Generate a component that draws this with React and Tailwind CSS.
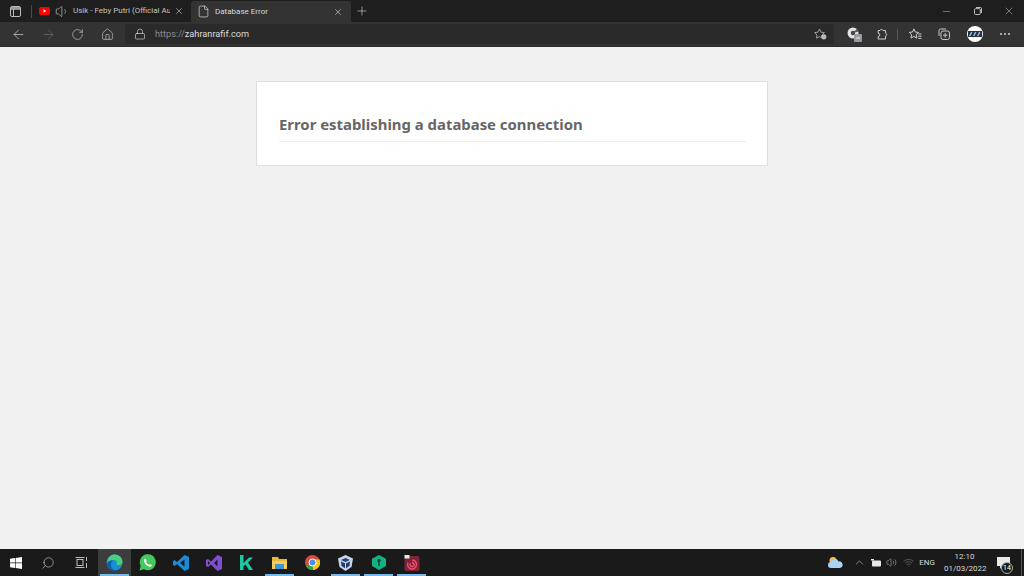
import { ArrowLeft, ArrowRight, RotateCw, Home, Lock, Plus, X, Minus, Volume1, File, Search, ChevronUp, Wifi, Volume2 } from "lucide-react"

const ui = { fontFamily: 'Roboto, "Open Sans", sans-serif' }

function Tabs() {
  return (
    <div className="h-[22px] bg-[#1e1e1e] flex items-stretch text-[#c4c4c4]">
      <div className="w-[31px] flex items-center justify-center">
        <svg width="11" height="11" viewBox="0 0 11 11" fill="none" stroke="#bdbdbd">
          <rect x="0.5" y="0.5" width="10" height="10" rx="1.5" />
          <path d="M0.5 3.2H10.5M3.5 3.2V10.5" />
          <path d="M1 1h9v2H1z" fill="#9a9a9a" stroke="none" />
        </svg>
      </div>
      <div className="w-px h-[13px] bg-[#4a4a4a] self-center" />
      <div className="w-[159px] flex items-center pl-[7px]">
        <svg width="11" height="8" viewBox="0 0 11 8" className="shrink-0">
          <rect width="11" height="8" rx="2" fill="#f00" />
          <path d="M4.5 2.2 7.3 4 4.5 5.8z" fill="#fff" />
        </svg>
        <Volume1 size={15} strokeWidth={1} className="ml-[5px] shrink-0 text-[#d0d0d0]" />
        <span className="ml-[3px] text-[8px] whitespace-nowrap overflow-hidden w-[97px]">Usik - Feby Putri (Official Au</span>
        <X size={10} strokeWidth={1.5} className="ml-[4px] shrink-0 text-[#d0d0d0]" />
      </div>
      <div className="w-[160px] bg-[#333333] rounded-t-[3px] mt-px flex items-center pl-[6px] text-[#d8d8d8]">
        <File size={13} strokeWidth={1.2} className="shrink-0 text-[#e8e8e8]" />
        <span className="ml-[5px] text-[8px] whitespace-nowrap w-[118px]">Database Error</span>
        <X size={10} strokeWidth={1.5} className="shrink-0 text-[#d0d0d0]" />
      </div>
      <div className="w-[22px] flex items-center justify-center">
        <Plus size={14} strokeWidth={1} className="text-[#e0e0e0]" />
      </div>
      <div className="ml-auto flex items-center text-[#cfcfcf]">
        <div className="w-[31px] flex justify-center"><Minus size={11} strokeWidth={1} /></div>
        <div className="w-[31px] flex justify-center">
          <svg width="8" height="8" viewBox="0 0 8 8" fill="none" stroke="#cfcfcf" strokeWidth="0.9">
            <rect x="0.5" y="1.7" width="5.8" height="5.8" rx="1" />
            <path d="M2 .5h4.5a1 1 0 0 1 1 1V6" />
          </svg>
        </div>
        <div className="w-[31px] flex justify-center"><X size={12} strokeWidth={1} /></div>
      </div>
    </div>
  )
}

function Toolbar() {
  return (
    <div className="h-[25px] bg-[#333333] flex items-start text-[#d6d6d6] border-b border-[#2a2a2a]">
      <div className="w-[125px] h-[24px] flex items-center shrink-0">
        <div className="w-[36px] flex justify-center"><ArrowLeft size={15} strokeWidth={1.1} /></div>
        <div className="w-[24px] flex justify-center text-[#6e6e6e]"><ArrowRight size={15} strokeWidth={1.1} /></div>
        <div className="w-[35px] flex justify-center"><RotateCw size={13} strokeWidth={1.1} /></div>
        <div className="w-[24px] flex justify-center"><Home size={13} strokeWidth={1.1} /></div>
      </div>
      <div className="w-[709px] h-[20px] mt-[2px] bg-[#2a2a2a] rounded-[3px] flex items-center pl-[9px] pr-[7px] shrink-0">
        <Lock size={12} strokeWidth={1.2} className="shrink-0 text-[#e8e8e8]" />
        <span className="ml-[9px] text-[9.2px] text-[#8a8a8a]">https://<span className="text-[#dcdcdc]">zahranrafif.com</span></span>
        <svg width="13" height="12" viewBox="0 0 13 12" fill="none" stroke="#a8a8a8" strokeWidth="0.9" className="ml-auto">
          <path d="M5.5 1 7 4.2l3.4.4L8 7l.6 3.2-3.1-1.6-3 1.6L3 7 .6 4.6 4 4.2z" />
          <circle cx="9.8" cy="8.8" r="2.6" fill="#bbb" stroke="none" />
        </svg>
      </div>
      <div className="h-[24px] flex items-center flex-1">
        <div className="w-[40px] flex justify-center">
          <svg width="15" height="16" viewBox="0 0 15 16">
            <circle cx="6" cy="7" r="5.5" fill="#e2e2e2" />
            <circle cx="6" cy="7" r="2.2" fill="#444" />
            <path d="M6 7 10 2.5l1.5 3z" fill="#555" />
            <rect x="7" y="8" width="8" height="8" rx="1" fill="#9a9aa2" />
            <path d="M9 12h4" stroke="#fff" strokeWidth="0.8" />
          </svg>
        </div>
        <div className="w-[16px] flex justify-center">
          <svg width="11" height="12" viewBox="0 0 11 12" fill="none" stroke="#cfcfcf" strokeWidth="1">
            <path d="M3 2.5a1.6 1.6 0 0 1 3 0h2.5V5a1.7 1.7 0 0 1 0 3.2V11H1.200V8.500a1.600 1.600 0 0 0 0-3.200V2.500z" />
          </svg>
        </div>
        <div className="w-px h-[11px] bg-[#555] ml-[7px]" />
        <div className="w-[32px] flex justify-center ml-px">
          <svg width="13" height="12" viewBox="0 0 12 11" fill="none" stroke="#d6d6d6" strokeWidth="0.9">
            <path d="M4.5.8 5.800 3.700l3 .3-2.200 2.100.6 3.200-2.700-1.600-2.700 1.600.6-3.200L.2 4l3-.3z" />
            <path d="M8.500 5.500h3M8.500 7.500h3M8.500 9.500h3" />
          </svg>
        </div>
        <div className="w-[26px] flex justify-center">
          <svg width="12" height="12" viewBox="0 0 12 12" fill="none" stroke="#d6d6d6" strokeWidth="0.9">
            <path d="M1 8V2.500A1.500 1.500 0 0 1 2.500 1H8" />
            <rect x="3" y="3" width="8.500" height="8.500" rx="2" />
            <path d="M7.200 5v4.500M5 7.200h4.500" />
          </svg>
        </div>
        <div className="w-[36px] flex justify-center">
          <div className="w-[16px] h-[16px] rounded-full bg-white flex items-center justify-center overflow-hidden">
            <svg width="14" height="6" viewBox="0 0 14 6">
              <rect width="14" height="6" fill="#26323f" />
              <path d="M1 5 3 1h1.500L2.500 5zM5 5l2-4h1.500l-2 4zM9 5l2-4h1.500l-2 4z" fill="#9cc3dc" />
            </svg>
          </div>
        </div>
        <div className="w-[24px] flex justify-center gap-[2px]">
          <span className="w-[2px] h-[2px] rounded-full bg-[#d0d0d0]" />
          <span className="w-[2px] h-[2px] rounded-full bg-[#d0d0d0]" />
          <span className="w-[2px] h-[2px] rounded-full bg-[#d0d0d0]" />
        </div>
      </div>
    </div>
  )
}

function TaskIcon({ active, running, children }) {
  return (
    <div className={`w-[33px] h-full flex items-center justify-center relative ${active ? "bg-[#3d3d3d]" : ""}`}>
      {children}
      {(active || running) && <div className="absolute bottom-0 left-[2px] right-[2px] h-[2px] bg-[#76b9ed]" />}
    </div>
  )
}

function Taskbar() {
  return (
    <div className="h-[27px] bg-[#1a1a1a] flex items-center text-[#d8d8d8] shrink-0">
      <div className="w-[32px] flex justify-center">
        <svg width="12" height="12" viewBox="0 0 12 12" fill="#fff">
          <path d="M0 1.700 5 1v4.600H0zM5.600.9 12 0v5.600H5.600zM0 6.300h5V11l-5-.7zM5.600 6.300H12V12l-6.400-.9z" />
        </svg>
      </div>
      <div className="w-[32px] flex justify-center"><Search size={14} strokeWidth={1} className="-scale-x-100" /></div>
      <div className="w-[34px] flex justify-center">
        <svg width="13" height="11" viewBox="0 0 13 11" fill="none" stroke="#d0d0d0" strokeWidth="0.9">
          <rect x="2" y="2.500" width="6" height="6" />
          <path d="M.5 0.500h9M.5 10.500h9M11.500 0v4M11.500 6v5" />
        </svg>
      </div>
      <TaskIcon active>
        <svg width="17" height="17" viewBox="0 0 17 17">
          <circle cx="8.500" cy="8.500" r="8" fill="#1b8fd6" />
          <path d="M1 8C2 3 5.500.5 8.500.5c4.500 0 8 3 8 7.500 0 2-1.500 3-3.500 3-1.500 0-2.500-.5-2.500-1 1-1 .5-4-3-4C5 6 2 6.500 1 8z" fill="#49d07a" />
          <path d="M5 11c0 3 2.500 5.500 6 5.500-3 1-9 0-10-7 1-2 4-3.500 6-3-1.500.5-2 2.500-2 4.500z" fill="#0c5fa8" />
        </svg>
      </TaskIcon>
      <TaskIcon>
        <svg width="17" height="17" viewBox="0 0 17 17">
          <path d="M.5 16.500 1.700 12A8 8 0 1 1 5 15.300z" fill="#48c95f" />
          <path d="M5.800 4.500c-1 1-1.200 2.500 0 4.500 1.200 2 3 3.500 5 3.800 1.200 0 2-.8 2-1.800l-2-1-.8.900c-1.300-.5-2.300-1.500-3-2.800l.7-.8-.8-2.200z" fill="#fff" />
        </svg>
      </TaskIcon>
      <TaskIcon>
        <svg width="16" height="16" viewBox="0 0 16 16">
          <path d="M11.500 0 16 2v12l-4.500 2L4 9l-2.500 2L0 10V6l1.500-1L4 7z" fill="#1c8ad6" />
          <path d="M11.500 4.500 7 8l4.500 3.500z" fill="#1a1a1a" />
        </svg>
      </TaskIcon>
      <TaskIcon>
        <svg width="16" height="16" viewBox="0 0 16 16">
          <path d="M11.500 0 16 2v12l-4.500 2L5 9.500 2 12l-2-1V5l2-1 3 2.500z" fill="#7f4fd0" />
          <path d="M11.500 4.500 8 8l3.500 3.500zM2 6v4l2-2z" fill="#1a1a1a" />
        </svg>
      </TaskIcon>
      <TaskIcon>
        <svg width="13" height="15" viewBox="0 0 13 15">
          <path d="M0 0h3.500v15H0zM3.500 8 9 2.500h4L8 7.500l5 7.500H9L5.500 9.500 3.500 11z" fill="#1fc7a0" />
        </svg>
      </TaskIcon>
      <TaskIcon running>
        <svg width="15" height="13" viewBox="0 0 15 13">
          <path d="M0 1h6l1 2h8v10H0z" fill="#e8b93f" />
          <rect x="0" y="5" width="15" height="8" fill="#f3cc5c" />
          <rect x="3" y="8" width="9" height="5" fill="#3f93d8" />
        </svg>
      </TaskIcon>
      <TaskIcon>
        <svg width="15" height="15" viewBox="0 0 15 15">
          <circle cx="7.500" cy="7.500" r="7.500" fill="#dd4b3e" />
          <path d="M7.500 7.500 1 11.200A7.500 7.500 0 0 0 8 15z" fill="#2fa350" />
          <path d="M7.500 4.500H14.500A7.500 7.500 0 0 1 8 15z" fill="#f5c518" />
          <circle cx="7.500" cy="7.500" r="3.500" fill="#4a8cf0" stroke="#fff" strokeWidth="1" />
        </svg>
      </TaskIcon>
      <TaskIcon running>
        <svg width="15" height="16" viewBox="0 0 15 16">
          <path d="M7.500 0 15 3.500 13.500 12 7.500 16 1.500 12 0 3.500z" fill="#c9d4e8" />
          <path d="M7.500 3 12 5 7.500 7 3 5zM3 6.500l4 1.800v5L3.500 11zM12 6.500 8 8.300v5l3.500-2.300z" fill="#21406e" />
        </svg>
      </TaskIcon>
      <TaskIcon running>
        <svg width="14" height="15" viewBox="0 0 14 15">
          <path d="M7 0 14 3.700V11L7 15 0 11V3.700z" fill="#13b184" />
          <circle cx="7" cy="5.500" r="1.800" fill="#0c4f3d" />
          <path d="M6.200 7h1.600v4H6.200z" fill="#0c4f3d" />
        </svg>
      </TaskIcon>
      <TaskIcon running>
        <svg width="16" height="16" viewBox="0 0 16 16" fill="none">
          <rect x="0.500" y="1" width="15" height="15" rx="2" fill="#7a2636" />
          <path d="M8 5a4.500 4.500 0 1 1-4 2.500M8 7.500a2 2 0 1 1-1.500.8" stroke="#f0506e" strokeWidth="1.400" />
          <rect x="0.500" y="0" width="5" height="3.500" fill="#e8e8e8" />
        </svg>
      </TaskIcon>
      <div className="ml-auto flex items-center h-full">
        <svg width="15" height="11" viewBox="0 0 15 11" className="mr-[10px]">
          <circle cx="5" cy="3.500" r="3.500" fill="#f2c14e" />
          <path d="M3 11a3 3 0 0 1 0-6 4 4 0 0 1 7.500-.5A3.300 3.300 0 0 1 12 11z" fill="#a9d6f5" />
        </svg>
        <ChevronUp size={13} strokeWidth={1} className="mr-[5px]" />
        <svg width="11" height="8" viewBox="0 0 11 8" className="mr-[4px]">
          <rect x="1" y="1.500" width="9" height="6" rx="1" fill="#e8e8e8" />
          <rect x="0" y="0" width="3" height="1.500" fill="#e8e8e8" />
        </svg>
        <Volume2 size={11} strokeWidth={1} className="mr-[6px]" />
        <Wifi size={11} strokeWidth={1} className="mr-[2px] text-[#a0a0a0]" />
        <span className="text-[8px] w-[22px] text-center">ENG</span>
        <div className="w-[41px] ml-[6px] text-center text-[8px] leading-[12px] whitespace-nowrap">
          <div>12:10</div>
          <div>01/03/2022</div>
        </div>
        <div className="w-[36px] flex justify-center relative h-full items-center">
          <svg width="13" height="12" viewBox="0 0 13 12">
            <path d="M0 0h13v9H5l-2 3V9H0z" fill="#e8e8e8" />
          </svg>
          <span className="absolute left-[16px] top-[13px] w-[12px] h-[12px] rounded-full bg-[#1a1a1a] border border-[#aaa] text-[7px] leading-[10px] text-center text-white">14</span>
        </div>
        <div className="w-[3px] h-full border-l border-[#555]" />
      </div>
    </div>
  )
}

export default function App() {
  return (
    <div className="h-[576px] flex flex-col bg-[#f1f1f1] overflow-hidden" style={ui}>
      <Tabs />
      <Toolbar />
      <main className="flex-1 pt-[34px]">
        <div className="w-[512px] h-[85px] mx-auto bg-white border border-[#dedede] pl-[22px] pr-[21px] pt-[31px]">
          <h1 className="text-[14.9px] leading-[22px] font-bold text-[#666666] border-b border-[#eeeeee] h-[29px] whitespace-nowrap font-['Noto_Sans']">
            Error establishing a database connection
          </h1>
        </div>
      </main>
      <Taskbar />
    </div>
  )
}
